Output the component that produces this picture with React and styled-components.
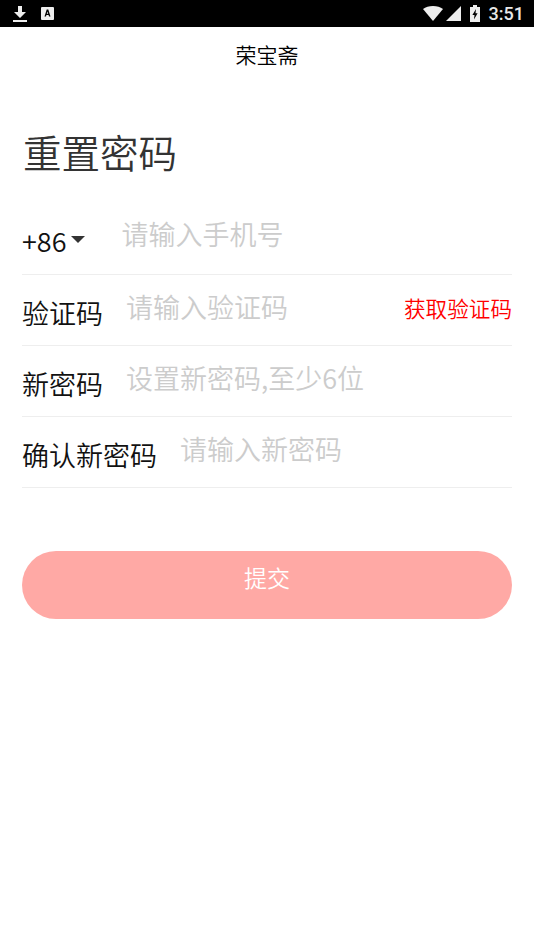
import React from "react";
import styled, { createGlobalStyle } from "styled-components";

const Global = createGlobalStyle`
  html, body {
    margin: 0;
    padding: 0;
    background: #fff;
  }
  body {
    font-family: "Noto Sans CJK SC", "Noto Sans", sans-serif;
  }
  * {
    box-sizing: border-box;
  }
`;

const Page = styled.div`
  width: 534px;
  height: 950px;
  background: #fff;
  overflow: hidden;
`;

const StatusBar = styled.div`
  height: 27px;
  background: #000;
  display: flex;
  align-items: center;
  justify-content: space-between;
  padding: 0 10px 0 13px;
`;

const StatusGroup = styled.div`
  display: flex;
  align-items: center;
  gap: ${(p) => p.$gap || 0}px;
`;

const Wifi = styled.svg`
  margin-right: 3px;
`;

const Signal = styled.svg`
  margin-right: 9px;
`;

const Battery = styled.svg`
  margin-right: 9px;
`;

const Clock = styled.span`
  font-family: Roboto, sans-serif;
  font-size: 18px;
  font-weight: 500;
  color: #e8e8e8;
  line-height: 27px;
`;

const Title = styled.div`
  height: 54px;
  display: flex;
  align-items: center;
  justify-content: center;
  font-size: 21px;
  font-weight: 350;
  color: #000;
`;

const Form = styled.div`
  padding: 0 22px;
`;

const Heading = styled.h1`
  margin: 41px 0 0 1px;
  font-size: 38.5px;
  font-weight: 350;
  line-height: 58px;
  color: #333;
`;

const Rows = styled.div`
  margin-top: 24px;
`;

const Row = styled.div`
  height: 71px;
  border-bottom: 1px solid #eeeeee;
  display: flex;
  align-items: flex-start;
`;

const Label = styled.span`
  font-size: 27px;
  font-weight: 350;
  line-height: 38px;
  margin: 19px 0 0 0;
  color: #111;
  white-space: nowrap;
`;

const Code = styled(Label)`
  font-family: "Noto Sans CJK SC", sans-serif;
  margin-top: 18px;
`;

const Caret = styled.i`
  width: 0;
  height: 0;
  margin: 32px 0 0 5px;
  border-left: 7px solid transparent;
  border-right: 7px solid transparent;
  border-top: 7px solid #333;
`;

const Placeholder = styled.span`
  font-size: 27px;
  font-weight: 350;
  line-height: 38px;
  color: #cccccc;
  margin-left: ${(p) => p.$left}px;
  margin-top: ${(p) => p.$top}px;
  white-space: nowrap;
`;

const GetCode = styled.span`
  margin-left: auto;
  margin-top: 17px;
  font-size: 21.6px;
  font-weight: 350;
  line-height: 32px;
  color: #ff0000;
`;

const Submit = styled.button`
  display: block;
  width: 100%;
  height: 68px;
  margin-top: 63px;
  border: 0;
  border-radius: 34px;
  background: #ffa9a5;
  color: #fff;
  font-family: inherit;
  font-size: 23px;
  font-weight: 350;
  padding: 0 0 16px;
`;

const App = () => (
  <Page>
    <Global />
    <StatusBar>
      <StatusGroup $gap={14}>
        <svg width="14" height="18" viewBox="0 0 14 18">
          <path d="M5 1h4v6h4L7 13 1 7h4z" fill="#eee" />
          <rect x="0" y="15" width="14" height="2" fill="#eee" />
        </svg>
        <svg width="13" height="13" viewBox="0 0 13 13">
          <rect width="13" height="13" rx="1" fill="#eee" />
          <path d="M3.5 9.5l2.2-7h1.6l2.2 7H8L7.6 8H5.4L5 9.5zM5.8 6.8h1.4l-.7-2.4z" fill="#000" />
        </svg>
      </StatusGroup>
      <StatusGroup>
        <Wifi width="20" height="15" viewBox="0 0 20 15">
          <path d="M0 3C2.6 1 6 0 10 0s7.4 1 10 3L10 15z" fill="#eee" />
        </Wifi>
        <Signal width="15" height="15" viewBox="0 0 15 15">
          <path d="M15 0v15H0z" fill="#eee" />
        </Signal>
        <Battery width="10" height="17" viewBox="0 0 10 17">
          <path d="M3 0h4v2h3v15H0V2h3z" fill="#eee" />
          <path d="M6 4L2.4 10h2.1L4 14.5 7.6 8.2H5.5z" fill="#000" />
        </Battery>
        <Clock>3:51</Clock>
      </StatusGroup>
    </StatusBar>
    <Title>荣宝斋</Title>
    <Form>
      <Heading>重置密码</Heading>
      <Rows>
        <Row>
          <Code>+86</Code>
          <Caret />
          <Placeholder $left={36} $top={11}>请输入手机号</Placeholder>
        </Row>
        <Row>
          <Label>验证码</Label>
          <Placeholder $left={23} $top={13}>请输入验证码</Placeholder>
          <GetCode>获取验证码</GetCode>
        </Row>
        <Row>
          <Label>新密码</Label>
          <Placeholder $left={23} $top={13}>设置新密码,至少6位</Placeholder>
        </Row>
        <Row>
          <Label>确认新密码</Label>
          <Placeholder $left={23} $top={13}>请输入新密码</Placeholder>
        </Row>
      </Rows>
      <Submit>提交</Submit>
    </Form>
  </Page>
);

export default App;
